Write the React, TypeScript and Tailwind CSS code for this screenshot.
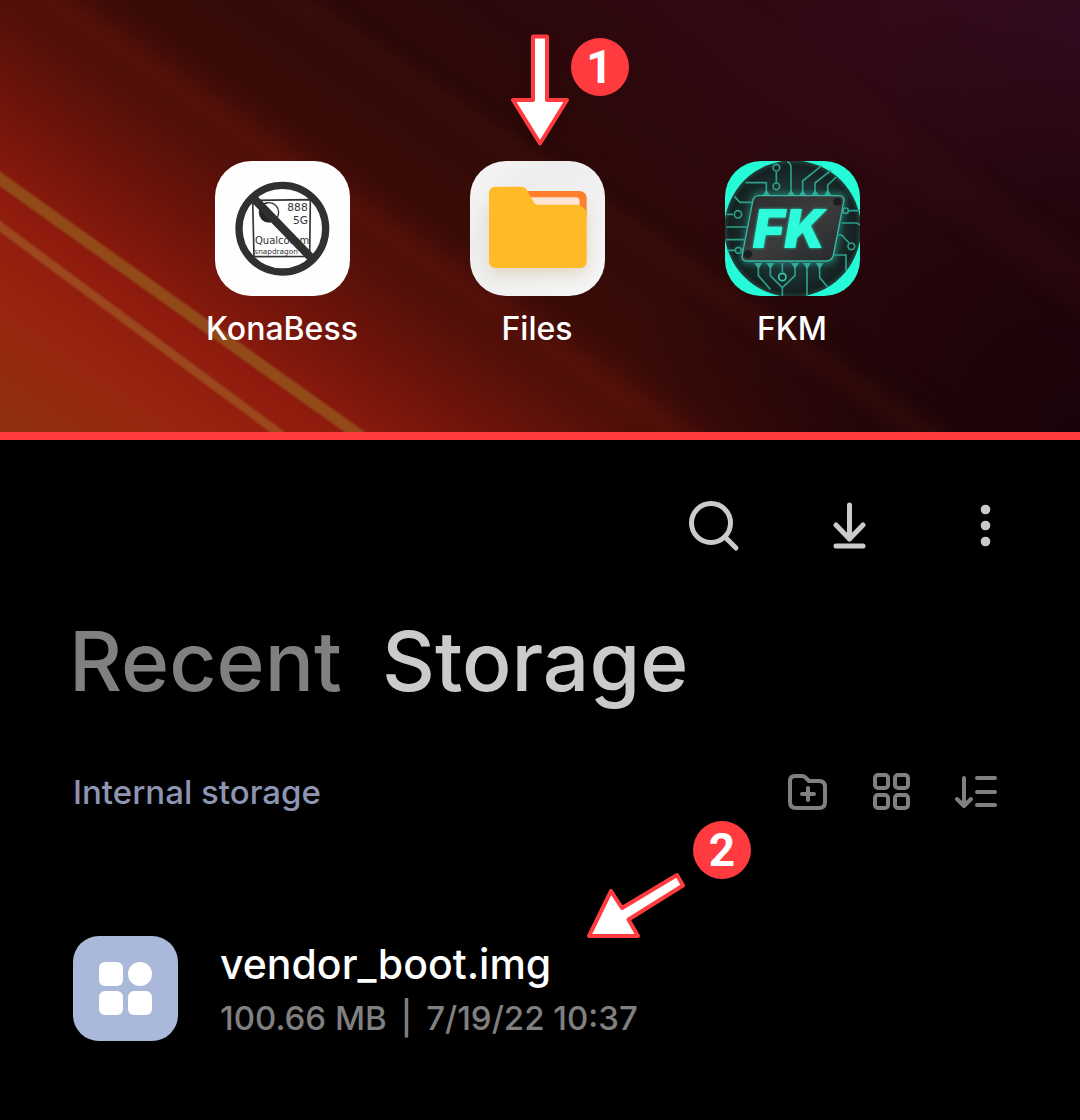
import type { ReactNode } from "react";

function Wallpaper() {
  return (
    <svg className="absolute inset-0 h-full w-full" viewBox="0 0 1080 432" preserveAspectRatio="none" aria-hidden="true">
      <defs>
        <linearGradient id="base" gradientUnits="userSpaceOnUse" x1="0" y1="432" x2="440" y2="-200">
          <stop offset="0" stopColor="#8f3010" />
          <stop offset="0.14" stopColor="#98250f" />
          <stop offset="0.25" stopColor="#8e1b0d" />
          <stop offset="0.36" stopColor="#6e140a" />
          <stop offset="0.5" stopColor="#470e08" />
          <stop offset="0.62" stopColor="#350b08" />
          <stop offset="0.8" stopColor="#2c080a" />
          <stop offset="1" stopColor="#2e0811" />
        </linearGradient>
        <radialGradient id="purple" gradientUnits="userSpaceOnUse" cx="1080" cy="40" r="480">
          <stop offset="0" stopColor="#330b23" />
          <stop offset="0.5" stopColor="#330a17" stopOpacity="0.7" />
          <stop offset="1" stopColor="#300810" stopOpacity="0" />
        </radialGradient>
        <radialGradient id="shade" gradientUnits="userSpaceOnUse" cx="1080" cy="432" r="460">
          <stop offset="0" stopColor="#190309" />
          <stop offset="0.5" stopColor="#1e0409" stopOpacity="0.7" />
          <stop offset="1" stopColor="#240508" stopOpacity="0" />
        </radialGradient>
        <filter id="haze" x="-20%" y="-20%" width="140%" height="140%" colorInterpolationFilters="sRGB">
          <feGaussianBlur stdDeviation="9" />
        </filter>
        <filter id="edge" colorInterpolationFilters="sRGB">
          <feGaussianBlur stdDeviation="1" />
        </filter>
      </defs>
      <rect width="1080" height="432" fill="url(#base)" />
      <rect width="1080" height="432" fill="url(#purple)" />
      <rect width="1080" height="432" fill="url(#shade)" />
      <g filter="url(#haze)" fill="none">
        <path d="M10 -30L730 470" stroke="#7a1c0c" strokeWidth="20" strokeOpacity="0.3" />
        <path d="M90 -30L810 470" stroke="#300806" strokeWidth="34" strokeOpacity="0.35" />
        <path d="M250 -30L950 450" stroke="#4a1409" strokeWidth="18" strokeOpacity="0.4" />
        <path d="M290 -30L990 450" stroke="#1c0405" strokeWidth="16" strokeOpacity="0.4" />
        <path d="M640 -30L1150 330" stroke="#3a0b15" strokeWidth="50" strokeOpacity="0.25" />
      </g>
      <g filter="url(#edge)" fill="none">
        <path d="M-10 219L288 440" stroke="#9d4c20" strokeWidth="9" strokeOpacity="0.9" />
        <path d="M-10 172L366 440" stroke="#94501b" strokeWidth="12" strokeOpacity="0.9" />
      </g>
    </svg>
  );
}

function KonaBessIcon() {
  return (
    <svg viewBox="0 0 405 405" className="size-full" aria-hidden="true">
      <rect width="405" height="405" fill="#fefefe" />
      <g fill="none" stroke="#333" strokeWidth="5">
        <path d="M113 118L286 116L284 286L117 287Z" />
        <circle cx="162" cy="154" r="29" strokeWidth="4" />
      </g>
      <path d="M160 124C138 124 131 140 134 156C137 174 148 184 168 182L176 164L142 134Z" fill="#222" />
      <g fill="#333" fontFamily="'DejaVu Sans', sans-serif">
        <text x="217" y="150" fontSize="32">888</text>
        <text x="234" y="188" fontSize="32">5G</text>
        <text x="120" y="250" fontSize="30">Qualcomm</text>
        <text x="118" y="280" fontSize="22">snapdragon</text>
      </g>
      <circle cx="202" cy="203" r="130" fill="none" stroke="#303030" strokeWidth="22" />
      <path d="M114 110L292 294" stroke="#303030" strokeWidth="25" />
    </svg>
  );
}

function FilesIcon() {
  return (
    <svg viewBox="0 0 405 405" className="size-full" aria-hidden="true">
      <defs>
        <linearGradient id="tile" x1="0" y1="0" x2="1" y2="1">
          <stop offset="0" stopColor="#f7f7f7" />
          <stop offset="0.3" stopColor="#ededed" />
          <stop offset="1" stopColor="#f6f6f6" />
        </linearGradient>
        <filter id="folderShadow" x="-30%" y="-30%" width="160%" height="160%">
          <feGaussianBlur stdDeviation="22" />
        </filter>
      </defs>
      <rect width="405" height="405" fill="url(#tile)" />
      <rect x="60" y="130" width="290" height="210" rx="20" fill="#cdb98a" opacity="0.45" filter="url(#folderShadow)" />
      <path d="M150 90H330Q350 92 350 112V170H150Z" fill="#ff7f2f" />
      <path d="M170 109H316Q329 109 329 122V150H170Z" fill="#fee5d3" />
      <path d="M77 77H156Q165 77 170 86L189 120Q194 131 204 131H320Q331 131 338 138L350 151V299Q350 321 328 321H79Q57 321 57 299V99Q57 77 77 77Z" fill="#ffba28" />
    </svg>
  );
}

function FkmIcon() {
  return (
    <svg viewBox="0 0 405 405" className="size-full" aria-hidden="true">
      <defs>
        <radialGradient id="disc">
          <stop offset="0" stopColor="#2a4a48" />
          <stop offset="0.72" stopColor="#1a2e2e" />
          <stop offset="0.93" stopColor="#142120" />
          <stop offset="1" stopColor="#23403c" />
        </radialGradient>
        <linearGradient id="chip" x1="0" y1="0" x2="1" y2="1">
          <stop offset="0" stopColor="#2b2b2d" />
          <stop offset="0.5" stopColor="#3c3c3d" />
          <stop offset="1" stopColor="#262829" />
        </linearGradient>
        <filter id="glow" x="-20%" y="-20%" width="140%" height="140%" colorInterpolationFilters="sRGB">
          <feGaussianBlur stdDeviation="9" />
        </filter>
      </defs>
      <rect width="405" height="405" fill="#25fbd6" />
      <circle cx="203" cy="203" r="205" fill="url(#disc)" />
      <path d="M102 96H346Q366 96 362 118L332 288Q328 308 308 308H62Q44 308 48 286L80 116Q84 96 102 96Z" fill="#2a9d8b" opacity="0.65" filter="url(#glow)" />
      <g fill="none" stroke="#2c9f8d" strokeWidth="5">
        <path d="M154 32V65M186 2Q198 6 198 20V104M290 14L233 60V104M318 28L270 66V104M334 48L308 72V104M62 65H124V104M28 106L45 124H84" />
        <path d="M5 160H24M4 198H70M4 236H58M8 268H30M50 268L60 258" />
        <path d="M405 192L396 186H350M405 149H370M340 222H350L372 246M325 282H363V330" />
        <path d="M100 306V344L136 385M136 306V344L172 380V405M172 306V334M210 306V344L172 380M246 306V405M284 306V350L308 378" />
        <circle cx="154" cy="20" r="10" />
        <circle cx="154" cy="76" r="10" />
        <circle cx="39" cy="160" r="11" />
        <circle cx="40" cy="268" r="9" />
        <circle cx="362" cy="149" r="8" />
        <circle cx="379" cy="256" r="10" />
        <circle cx="172" cy="348" r="11" stroke="#35c9b2" />
      </g>
      <g fill="#30ad9a">
        <path d="M112 104L124 86L136 104ZM186 104L198 86L210 104ZM222 104L233 86L244 104ZM258 104L270 86L282 104ZM296 104L308 86L320 104Z" />
        <path d="M88 306H112L100 324ZM124 306H148L136 324ZM198 306H222L210 324ZM234 306H258L246 324ZM272 306H296L284 324Z" />
      </g>
      <path d="M102 104H340Q360 104 356 124L325 282Q321 300 303 300H66Q48 300 52 280L83 122Q86 104 102 104Z" fill="url(#chip)" stroke="#36b7a3" strokeWidth="4" />
      <circle cx="337" cy="122" r="12" fill="#1c1d1e" />
      <circle cx="69" cy="280" r="12" fill="#1c1d1e" />
      <text
        x="83"
        y="261"
        fill="#2dfbdc"
        fontFamily="Inter, sans-serif"
        fontSize="162"
        fontWeight="900"
        fontStyle="italic"
        className="drop-shadow-[0_0_4px_#20cdb0]"
      >
        FK
      </text>
    </svg>
  );
}

function AppShortcut({ name, children, callout }: { name: string; children: ReactNode; callout?: ReactNode }) {
  return (
    <a href="#" className="relative flex w-[155px] flex-col items-center gap-3">
      <span className="size-[135px] overflow-hidden rounded-[36px]">{children}</span>
      <span className="text-[32px] leading-[42px] font-medium text-white">{name}</span>
      {callout}
    </a>
  );
}

function Badge({ children }: { children: ReactNode }) {
  return (
    <span className="flex size-[58px] items-center justify-center rounded-full bg-[#ff3b40] font-[Roboto,sans-serif] text-[46px] leading-none font-bold text-white">
      {children}
    </span>
  );
}

function IconButton({ label, className, children }: { label: string; className: string; children: ReactNode }) {
  return (
    <button type="button" aria-label={label} className={className}>
      {children}
    </button>
  );
}

export default function App() {
  return (
    <main className="min-h-screen bg-black font-[Inter,sans-serif]">
      <section className="relative overflow-hidden border-b-8 border-[#ff3b40] bg-[#2b070a] pt-[161px] pb-[82px]">
        <Wallpaper />
        <div className="relative flex justify-center gap-[100px] pr-[6px]">
          <AppShortcut name="KonaBess">
            <KonaBessIcon />
          </AppShortcut>
          <AppShortcut
            name="Files"
            callout={
              <span className="absolute bottom-full left-[51px] mb-[15px] flex gap-[2px]">
                <svg width="58" height="112" viewBox="0 0 58 112" className="drop-shadow-lg" aria-hidden="true">
                  <path d="M22 2.500H36V66H56L29 109.500L2 66H22Z" fill="#fff" stroke="#ff3b40" strokeWidth="4" strokeLinejoin="round" />
                </svg>
                <span className="pt-1">
                  <Badge>1</Badge>
                </span>
              </span>
            }
          >
            <FilesIcon />
          </AppShortcut>
          <AppShortcut name="FKM">
            <FkmIcon />
          </AppShortcut>
        </div>
      </section>

      <section className="pt-14 pr-16 pl-[73px]">
        <div className="flex items-center justify-end gap-[72px] text-[#cbcbcb]">
          <IconButton label="Search" className="size-16">
            <svg viewBox="0 0 64 64" className="size-16" fill="none" stroke="currentColor" strokeWidth="5" strokeLinecap="round" aria-hidden="true">
              <circle cx="31" cy="27" r="19.500" />
              <path d="M45 41L56 52" />
            </svg>
          </IconButton>
          <IconButton label="Downloads" className="size-16">
            <svg viewBox="0 0 64 64" className="size-16" fill="none" stroke="currentColor" strokeWidth="5" strokeLinecap="round" strokeLinejoin="round" aria-hidden="true">
              <path d="M33.500 9V43M20 29L33.500 43L47 29M20 50H47" />
            </svg>
          </IconButton>
          <IconButton label="More options" className="size-16">
            <svg viewBox="0 0 64 64" className="size-16" fill="currentColor" aria-hidden="true">
              <circle cx="33.500" cy="13.500" r="4.800" />
              <circle cx="33.500" cy="29.500" r="4.800" />
              <circle cx="33.500" cy="45.500" r="4.800" />
            </svg>
          </IconButton>
        </div>

        <nav className="mt-[42px] flex gap-10 text-[82px] leading-[120px] font-medium">
          <button type="button" className="-ml-1 text-[#808080]">Recent</button>
          <button type="button" className="text-[#cbcbcb]">Storage</button>
        </nav>

        <div className="relative mt-[46px] flex items-center justify-between pr-4">
          <a href="#" className="text-[33px] leading-12 font-medium text-[#8e95b3]">Internal storage</a>
          <div className="flex items-center gap-9 text-[#808080]">
            <IconButton label="New folder" className="size-12">
              <svg viewBox="0 0 48 48" className="size-12" fill="none" stroke="currentColor" strokeWidth="4" strokeLinecap="round" strokeLinejoin="round" aria-hidden="true">
                <path d="M11 8H18Q20 8 21.500 9.500L25 13H35Q41 13 41 19V34Q41 40 35 40H12Q6 40 6 34V13Q6 8 11 8ZM24 20V32M18 26H30" />
              </svg>
            </IconButton>
            <IconButton label="Grid view" className="size-12">
              <svg viewBox="0 0 48 48" className="size-12" fill="none" stroke="currentColor" strokeWidth="4" aria-hidden="true">
                <rect x="7" y="7" width="13" height="13" rx="3" />
                <rect x="27" y="7" width="13" height="13" rx="3" />
                <rect x="7" y="27" width="13" height="13" rx="3" />
                <rect x="27" y="27" width="13" height="13" rx="3" />
              </svg>
            </IconButton>
            <IconButton label="Sort" className="size-12">
              <svg viewBox="0 0 48 48" className="size-12" fill="none" stroke="currentColor" strokeWidth="4" strokeLinecap="round" strokeLinejoin="round" aria-hidden="true">
                <path d="M12 10V38M5 31L12 38L19 31M25 10H43M25 24H43M25 37H43" />
              </svg>
            </IconButton>
          </div>
          <div className="absolute top-[53px] left-[513px] flex">
            <svg width="100" height="68" viewBox="0 0 100 68" className="mt-[50px]" aria-hidden="true">
              <path d="M3 65H52L42.500 48.500L97 14.500L91 4L36 37L25 20Z" fill="#fff" stroke="#ff3b40" strokeWidth="4" strokeLinejoin="round" />
            </svg>
            <span className="ml-[7px]">
              <Badge>2</Badge>
            </span>
          </div>
        </div>

        <a href="#" className="mt-[118px] flex items-center gap-[42px] pb-[79px]">
          <svg viewBox="0 0 105 105" className="size-[105px]" aria-hidden="true">
            <rect width="105" height="105" rx="26" fill="#aab9da" />
            <g fill="#fff">
              <rect x="26" y="26" width="24" height="24" rx="6" />
              <circle cx="67" cy="38" r="12" />
              <rect x="26" y="55" width="24" height="24" rx="6" />
              <rect x="55" y="55" width="24" height="24" rx="6" />
            </g>
          </svg>
          <span className="flex flex-col gap-1.5 pt-1.5">
            <span className="text-[41px] leading-12 font-medium text-white">vendor_boot.img</span>
            <span className="flex gap-3.5 text-[33px] leading-12 font-medium text-[#808080]">
              <span>100.66 MB</span>
              <span>|</span>
              <span>7/19/22 10:37</span>
            </span>
          </span>
        </a>
      </section>
    </main>
  );
}
